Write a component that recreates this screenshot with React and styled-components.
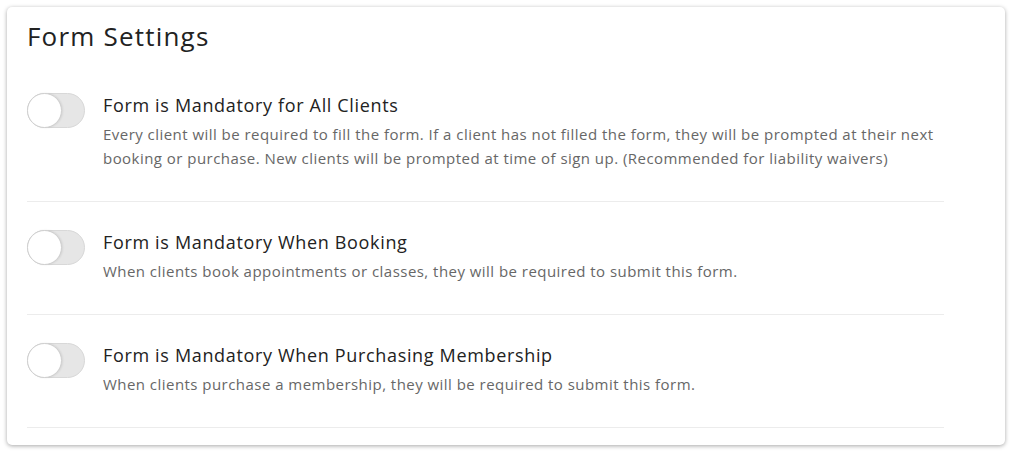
import React, { useState } from 'react';
import styled, { createGlobalStyle } from 'styled-components';

const GlobalStyle = createGlobalStyle`
  html, body {
    margin: 0;
    padding: 0;
    background: #ffffff;
  }
  body {
    font-family: "Open Sans", Lato, Arial, sans-serif;
  }
`;

const Page = styled.div`
  padding: 7px 9px 8px 7px;
`;

const Card = styled.div`
  background: #fff;
  border-radius: 5px;
  box-shadow: 0 1px 4px rgba(0, 0, 0, 0.35);
  padding: 13px 61px 17px 20px;
  height: 438px;
  box-sizing: border-box;
`;

const Title = styled.h1`
  margin: 0 0 13px;
  font-size: 26px;
  line-height: 32px;
  font-weight: 400;
  letter-spacing: 1.2px;
  color: #222;
`;

const SettingRow = styled.div`
  display: flex;
  align-items: flex-start;
  gap: 18px;
  padding: 28px 0 31px;
  border-bottom: 1px solid #ececec;
`;

const Track = styled.button`
  position: relative;
  flex: none;
  width: 58px;
  height: 35px;
  padding: 0;
  border: 1px solid #d8d8d8;
  border-radius: 18px;
  background: ${p => (p.$on ? '#3fb8af' : '#e6e6e6')};
  cursor: pointer;
  box-sizing: border-box;
`;

const Knob = styled.span`
  position: absolute;
  top: -1px;
  left: ${p => (p.$on ? '22px' : '-1px')};
  width: 35px;
  height: 35px;
  border-radius: 50%;
  background: #fff;
  border: 1px solid #cfcfcf;
  box-sizing: border-box;
  box-shadow: 1px 0 2px rgba(0, 0, 0, 0.08);
`;

const Text = styled.div`
  display: flex;
  flex-direction: column;
`;

const Label = styled.div`
  font-size: 18px;
  line-height: 24px;
  letter-spacing: 0.66px;
  color: #222;
`;

const Description = styled.div`
  margin-top: 5px;
  font-size: 15px;
  line-height: 24px;
  letter-spacing: 0.46px;
  color: #676767;
`;

const settings = [
  {
    label: 'Form is Mandatory for All Clients',
    text: 'Every client will be required to fill the form. If a client has not filled the form, they will be prompted at their next booking or purchase. New clients will be prompted at time of sign up. (Recommended for liability waivers)',
  },
  {
    label: 'Form is Mandatory When Booking',
    text: 'When clients book appointments or classes, they will be required to submit this form.',
  },
  {
    label: 'Form is Mandatory When Purchasing Membership',
    text: 'When clients purchase a membership, they will be required to submit this form.',
  },
];

const Toggle = () => {
  const [on, setOn] = useState(false);
  return (
    <Track $on={on} onClick={() => setOn(!on)} aria-pressed={on}>
      <Knob $on={on} />
    </Track>
  );
};

export default function App() {
  return (
    <>
      <GlobalStyle />
      <Page>
        <Card>
          <Title>Form Settings</Title>
          {settings.map((s) => (
            <SettingRow key={s.label}>
              <Toggle />
              <Text>
                <Label>{s.label}</Label>
                <Description>{s.text}</Description>
              </Text>
            </SettingRow>
          ))}
        </Card>
      </Page>
    </>
  );
}
